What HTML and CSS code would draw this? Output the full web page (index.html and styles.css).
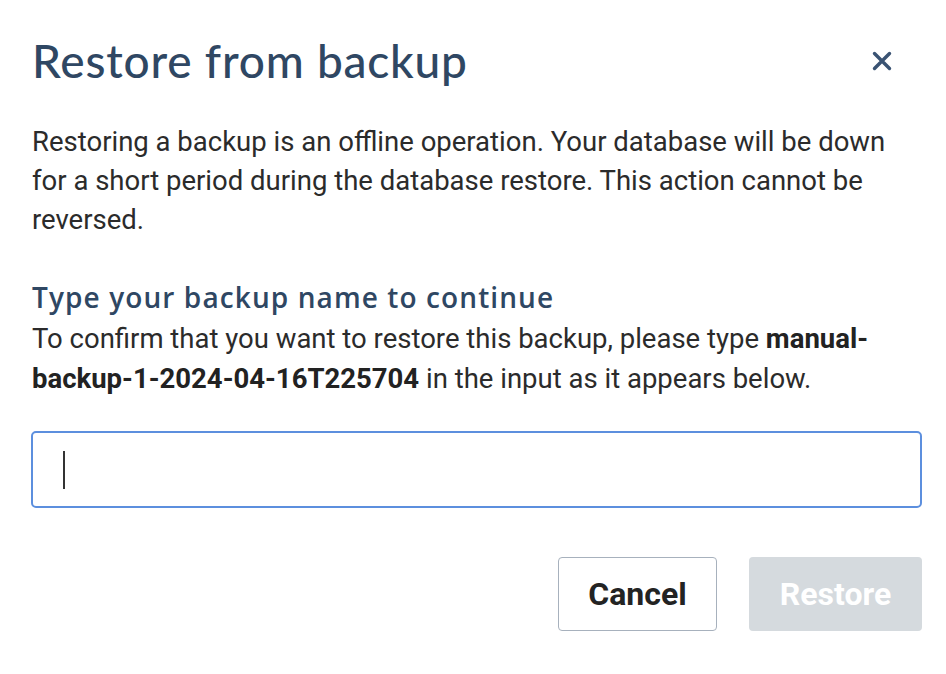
FILE: index.html
```html
<!DOCTYPE html>
<html lang="en">
<head>
    <meta charset="UTF-8">
    <meta name="viewport" content="width=device-width, initial-scale=1.0">
    <title>Restore from backup</title>
    <link rel="stylesheet" href="styles.css">
</head>
<body>
    <div class="dialog">
        <div class="dialog-header">
            <h1>Restore from backup</h1>
            <button class="close" aria-label="Close">
                <svg width="20" height="20" viewBox="0 0 20 20">
                    <path d="M2.5 2.5L17.5 17.5M17.5 2.5L2.5 17.5" stroke="currentColor" stroke-width="3.4" stroke-linecap="round"/>
                </svg>
            </button>
        </div>
        <p class="intro">Restoring a backup is an offline operation. Your database will be down for a short period during the database restore. This action cannot be reversed.</p>
        <h2>Type your backup name to continue</h2>
        <p class="confirm">To confirm that you want to restore this backup, please type <strong>manual-backup-1-2024-04-16T225704</strong> in the input as it appears below.</p>
        <div class="field">
            <span class="caret"></span>
        </div>
        <div class="actions">
            <button class="btn btn-cancel">Cancel</button>
            <button class="btn btn-restore" disabled>Restore</button>
        </div>
    </div>
</body>
</html>
```

FILE: styles.css
```css
body { margin: 0; background: #fff; font-family: Roboto, "Liberation Sans", sans-serif; }
.dialog { width: 891px; padding: 32px 24px 0 31px; }
.dialog-header { display: flex; align-items: center; justify-content: space-between; }
h1 { margin: 0 0 0 1px; font-family: Lato, sans-serif; font-weight: 500; font-size: 46px; line-height: 58px; color: #2f4763; letter-spacing: 0.8px; }
.close { background: none; border: none; padding: 0; margin-right: 30px; color: #3a5373; display: flex; cursor: pointer; }
.intro { margin: 32px 0 0 1px; font-size: 27.5px; line-height: 39px; color: #2b2b2b; }
h2 { margin: 38px 0 0 1px; font-family: "Open Sans", sans-serif; font-weight: 600; font-size: 28px; line-height: 40px; color: #2f4763; letter-spacing: 1.1px; }
.confirm { margin: 2px 0 0 1px; font-size: 27.5px; line-height: 40px; color: #2b2b2b; }
.confirm strong { font-weight: 700; color: #222; }
.field { margin-top: 32px; height: 73px; border: 2px solid #5c8fde; border-radius: 5px; display: flex; align-items: center; padding-left: 30px; }
.caret { width: 2px; height: 38px; background: #333; }
.actions { display: flex; justify-content: flex-end; gap: 32px; margin-top: 49px; }
.btn { height: 74px; font-family: Roboto, "Liberation Sans", sans-serif; font-size: 32px; font-weight: 700; border-radius: 4px; }
.btn-cancel { width: 159px; background: #fff; border: 1.5px solid #a7b1bd; color: #232323; }
.btn-restore { width: 173px; background: #d5dade; border: none; color: #fff; }
```
